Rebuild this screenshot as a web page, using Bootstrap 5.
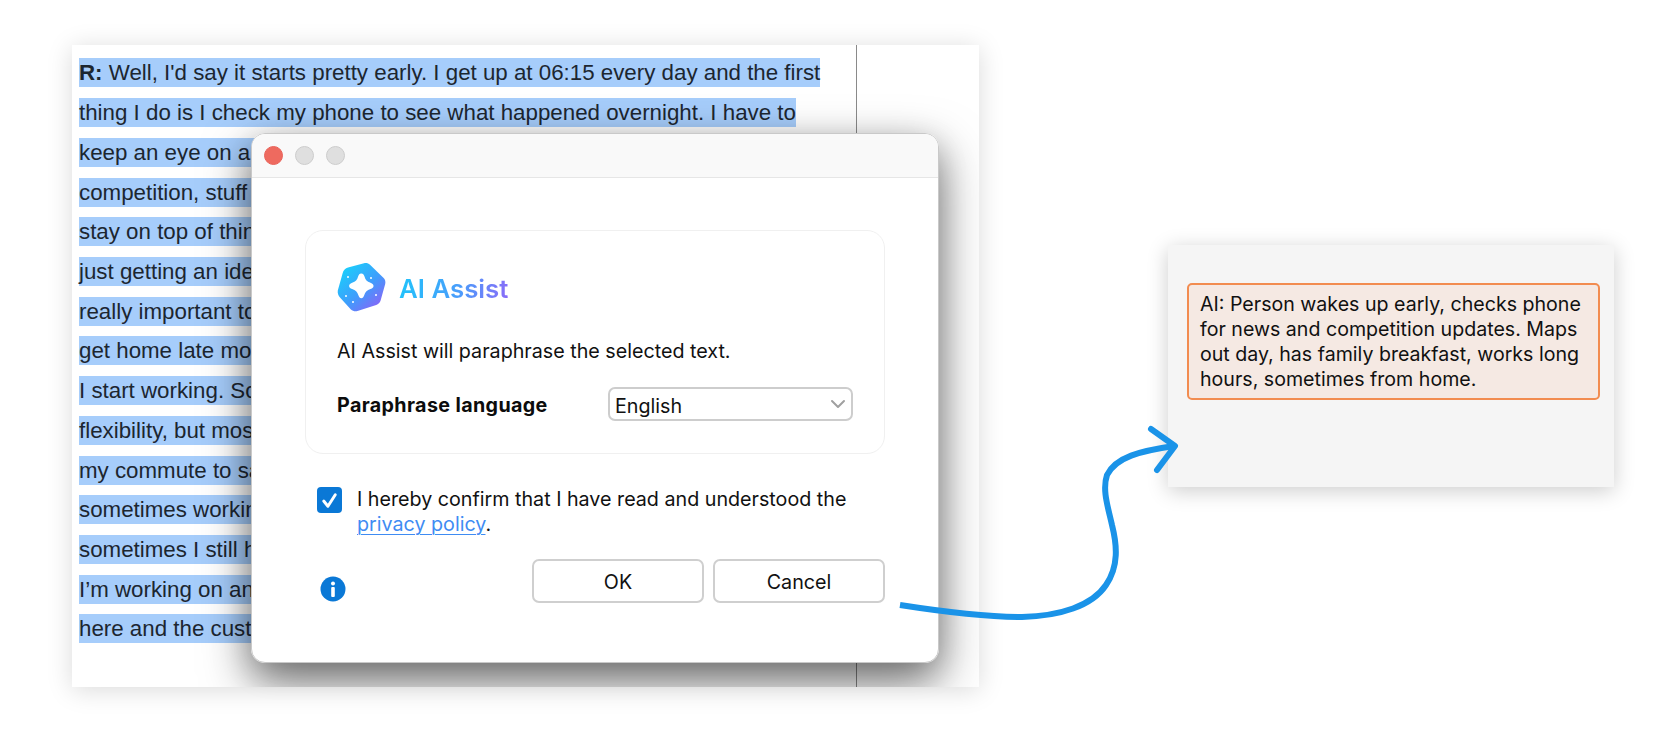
<!DOCTYPE html>
<html lang="en">
<head>
<meta charset="utf-8">
<title>AI Assist</title>
<link href="https://cdn.jsdelivr.net/npm/bootstrap@5.3.0/dist/css/bootstrap.min.css" rel="stylesheet">
<style>
html,body{margin:0;background:#fff;width:1678px;height:732px;overflow:hidden}
.stage{position:relative;width:1678px;height:732px;font-family:Inter,"Liberation Sans",sans-serif;color:#111}
.doc-win{position:absolute;left:72px;top:45px;width:907px;height:642px;background:#fff;box-shadow:0 3px 24px rgba(0,0,0,.15);overflow:hidden;padding:8.4px 0 0 7px;font-family:"Liberation Sans",Arial,sans-serif;font-size:22.32px;color:#1c2630}
.doc-rule{position:absolute;left:784px;top:0;bottom:0;width:1px;background:#8a8a8a}
.doc-shade{position:absolute;left:179px;top:88px;width:688px;height:530px;border-radius:14px;box-shadow:0 18px 48px rgba(0,0,0,.55)}
.doc-line{height:39.72px;line-height:39.72px;white-space:nowrap}
.doc-line span{background:#a6cdfb;padding:2px 0}
.doc-line .under{padding-right:260px}
.dlg{position:absolute;left:251px;top:133px;width:688px;height:530px;background:#fff;border-radius:14px;border:1px solid #c9c9c9;box-shadow:0 10px 30px rgba(0,0,0,.14);overflow:hidden}
.dlg-bar{height:44px;background:#f9f9f9;border-bottom:1px solid #e6e6e6;padding-left:12px;gap:12px}
.tl{width:19px;height:19px;border-radius:50%;background:#dfdfdf;border:1px solid #cdcdcd}
.tl-red{background:#ee6a5f;border-color:#e9635a}
.dlg-main{padding:52px 53px 0 53px}
.lang-card{height:224px;border:1px solid #f0f0f0;border-radius:18px;padding:31px 30px 0 31px;--bs-card-bg:#fff}
.logo-row{gap:13px;height:50px}
.logo-name{font-size:25.8px;font-weight:600;line-height:30px;margin-top:4px;background:linear-gradient(100deg,#1fc4fb 0%,#4a9dfb 55%,#8a6bf8 100%);-webkit-background-clip:text;background-clip:text;color:transparent}
.lede{font-size:19.7px;line-height:26px;margin:26px 0 0}
.lang-row{margin-top:23px}
.lang-label{font-size:19.7px;letter-spacing:.37px;font-weight:700;width:271px;color:#0c0c0c;padding-top:4px}
.lang-select{width:245px;height:34px;padding:3px 30px 0 5px;font-family:Inter,sans-serif;font-size:19.7px;color:#111;border:2px solid #cdcdcd;border-radius:7px;background-size:18px 12px;background-position:right 4px center;background-image:url("data:image/svg+xml,%3csvg xmlns='http://www.w3.org/2000/svg' viewBox='0 0 18 12'%3e%3cpath fill='none' stroke='%23a0a0a0' stroke-width='2' stroke-linecap='round' stroke-linejoin='round' d='M3 3l6 6 6-6'/%3e%3c/svg%3e")}
.consent{margin:32px 0 0 12px;gap:15px}
.consent-box{width:25px;height:26px;margin:1px 0 0;flex:none;border:0;border-radius:4px;background-size:21px}
.consent-box:checked{background-color:#0a78d6;background-image:url("data:image/svg+xml,%3csvg xmlns='http://www.w3.org/2000/svg' viewBox='0 0 20 20'%3e%3cpath fill='none' stroke='%23fff' stroke-width='2.8' stroke-linecap='round' stroke-linejoin='round' d='M4.500 10.500l4 5 7-11'/%3e%3c/svg%3e")}
.consent-text{font-size:19.7px;line-height:25px;color:#111;padding-top:1px}
.consent-text a{color:#3f8cf3;text-decoration-thickness:1px;text-underline-offset:3px}
.act-row{margin-top:22px}
.info-ico{margin:17px 0 0 15px}
.act-btn{width:172px;height:44px;padding:3px 0 0;font-size:19.7px;font-family:Inter,sans-serif;color:#111;background:#fff;border:2px solid #cfcfcf;border-radius:7px}
.act-gap{gap:9px}
.out-win{position:absolute;left:1168px;top:245px;width:446px;height:242px;background:#f5f5f5;box-shadow:0 4px 20px rgba(0,0,0,.2);padding:38px 14px 0 19px}
.out-box{height:117px;border:2px solid #f28c50;border-radius:5px;background:#f5e9e3;padding:7px 11px;font-size:19.6px;line-height:25px;color:#111}
.flow-arrow{position:absolute;left:0;top:0;pointer-events:none}
</style>
</head>
<body>
<div class="stage">
  <div class="doc-win">
    <div class="doc-rule"></div>
    <div class="doc-line"><span><strong>R:</strong> Well, I'd say it starts pretty early. I get up at 06:15 every day and the first</span></div>
    <div class="doc-line"><span>thing I do is I check my phone to see what happened overnight. I have to</span></div>
    <div class="doc-line"><span class="under">keep an eye on a</span></div>
    <div class="doc-line"><span class="under">competition, stuff</span></div>
    <div class="doc-line"><span class="under">stay on top of things</span></div>
    <div class="doc-line"><span class="under">just getting an idea</span></div>
    <div class="doc-line"><span class="under">really important to</span></div>
    <div class="doc-line"><span class="under">get home late most</span></div>
    <div class="doc-line"><span class="under">I start working. So</span></div>
    <div class="doc-line"><span class="under">flexibility, but most</span></div>
    <div class="doc-line"><span class="under">my commute to save</span></div>
    <div class="doc-line"><span class="under">sometimes working</span></div>
    <div class="doc-line"><span class="under">sometimes I still have</span></div>
    <div class="doc-line"><span class="under">I’m working on an</span></div>
    <div class="doc-line"><span class="under">here and the customer</span></div>
    <div class="doc-shade"></div>
  </div>

  <div class="dlg">
    <div class="dlg-bar d-flex align-items-center">
      <span class="tl tl-red"></span><span class="tl"></span><span class="tl"></span>
    </div>
    <div class="dlg-main">
      <div class="card lang-card">
        <div class="logo-row d-flex align-items-center">
          <svg width="49" height="50" viewBox="0 0 49 50" aria-hidden="true">
            <defs><linearGradient id="lg" x1="0.1" y1="0.1" x2="0.85" y2="0.95"><stop offset="0" stop-color="#19d0fb"/><stop offset=".55" stop-color="#3f9dfc"/><stop offset="1" stop-color="#8a63f7"/></linearGradient></defs>
            <path fill="url(#lg)" d="M11 5.500 27 1.300c2.200-.6 4.400 0 6 1.400l13.400 13c1.700 1.600 2.400 4 1.800 6.200l-4.600 16.500c-.6 2.200-2.300 3.800-4.400 4.500L20.500 49c-2.400.7-4.800.1-6.600-1.500L3 35.500C1.300 33.600.4 31 .8 28.400L5.700 11c.7-2.700 2.700-4.800 5.300-5.500z"/>
            <path fill="#fff" d="M24.500 11.500c1.500 0 2.300 1 3 3 .9 3.300 2.400 5 6 6.300 2.200.8 3 1.800 3 3.200s-1 2.400-3 3.100c-3.500 1.200-5.200 3-6.300 6.200-.7 2-1.500 3-2.900 3s-2.200-1-2.900-3c-1.100-3.200-2.800-5-6.300-6.200-2-.7-3-1.700-3-3.100s.8-2.400 3-3.200c3.600-1.300 5.100-3 6-6.300.7-2 1.500-3 2.900-3z"/>
            <g fill="#fff"><circle cx="11" cy="15" r="1"/><circle cx="34" cy="16" r="1"/><circle cx="9" cy="34" r="1"/><circle cx="16" cy="40" r="1"/><circle cx="39" cy="33" r="1"/></g>
          </svg>
          <span class="logo-name">AI Assist</span>
        </div>
        <p class="lede">AI Assist will paraphrase the selected text.</p>
        <div class="lang-row d-flex align-items-center">
          <span class="lang-label">Paraphrase language</span>
          <select class="form-select lang-select" aria-label="Paraphrase language"><option>English</option></select>
        </div>
      </div>
      <div class="consent d-flex align-items-start">
        <input class="form-check-input consent-box" type="checkbox" checked aria-label="Confirm">
        <div class="consent-text">I hereby confirm that I have read and understood the<br><a href="#">privacy policy</a>.</div>
      </div>
      <div class="act-row d-flex justify-content-between align-items-start">
        <svg class="info-ico" width="26" height="26" viewBox="0 0 26 26" aria-hidden="true">
          <circle cx="13" cy="13" r="12.500" fill="#0a78d6"/>
          <circle cx="13" cy="7.500" r="2" fill="#fff"/>
          <rect x="11.200" y="11" width="3.600" height="10" rx="1" fill="#fff"/>
        </svg>
        <div class="d-flex act-gap">
          <button type="button" class="btn act-btn">OK</button>
          <button type="button" class="btn act-btn">Cancel</button>
        </div>
      </div>
    </div>
  </div>

  <div class="out-win">
    <div class="out-box">AI: Person wakes up early, checks phone for news and competition updates. Maps out day, has family breakfast, works long hours, sometimes from home.</div>
  </div>

  <svg class="flow-arrow" width="1678" height="732" viewBox="0 0 1678 732" aria-hidden="true">
    <path fill="none" stroke="#1a93e8" stroke-width="6" stroke-linejoin="round" d="M900 605C945 612 985 617 1022 617 1060 616 1092 606 1106 585 1119 566 1117 545 1112 525 1108 507 1102 490 1107 475 1116 457 1140 451 1174 446"/>
    <path fill="none" stroke="#1a93e8" stroke-width="6" stroke-linecap="round" stroke-linejoin="round" d="M1151 429 1175 446 1157 470"/>
  </svg>
</div>
<script src="https://cdn.jsdelivr.net/npm/bootstrap@5.3.0/dist/js/bootstrap.bundle.min.js"></script>
</body>
</html>
